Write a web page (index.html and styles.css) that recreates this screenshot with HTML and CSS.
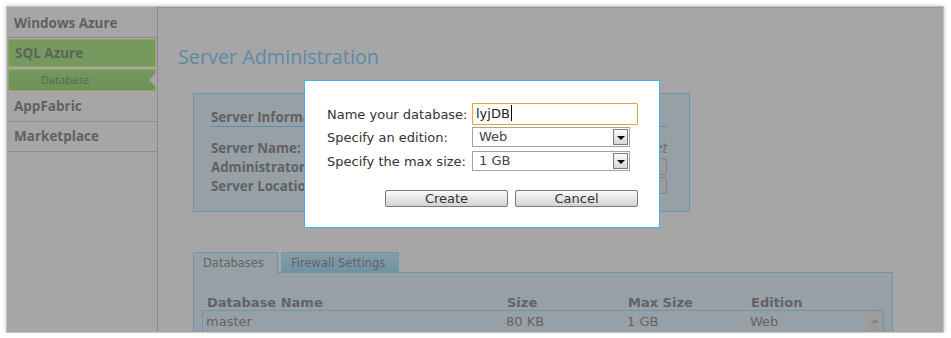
FILE: index.html
```html
<!DOCTYPE html>
<html>
<head>
	<title>Server Administration</title>
	<meta charset="utf-8">
	<link rel="stylesheet" href="styles.css">
</head>
<body>
<div class="janela">
	<div class="menu">
		<div class="item primeiro">Windows Azure</div>
		<div class="item ativo">SQL Azure</div>
		<div class="subitem ativo">Database</div>
		<div class="item">AppFabric</div>
		<div class="item">Marketplace</div>
	</div>

	<div class="conteudo">
		<h1>Server Administration</h1>

		<div class="infoServidor">
			<div class="tituloInfo">Server Information</div>
			<div class="linhaInfo">
				<span>Server Name:</span>
				<span class="valorInfo">xw2p8tzq1c.database.windows.net</span>
			</div>
			<div class="linhaInfo">
				<span>Administrator Login:</span>
				<span class="botaoInfo">Reset Password</span>
			</div>
			<div class="linhaInfo">
				<span>Server Location:</span>
				<span class="botaoInfo">Drop Server</span>
			</div>
		</div>

		<div class="abas">
			<div class="aba abaAtiva">Databases</div>
			<div class="aba">Firewall Settings</div>
		</div>
		<div class="painel">
			<div class="cabecalho">
				<span>Database Name</span>
				<span>Size</span>
				<span>Max Size</span>
				<span>Edition</span>
			</div>
			<div class="linhas">
				<div class="linha">
					<span>master</span>
					<span>80 KB</span>
					<span>1 GB</span>
					<span>Web</span>
				</div>
				<div class="rolagem"><span class="setaCima"></span></div>
			</div>
		</div>
	</div>

	<div class="sombra"></div>

	<div class="dialogo">
		<div class="campo">
			<label>Name your database:</label>
			<div class="caixaTexto">lyjDB<span class="cursor"></span></div>
		</div>
		<div class="campo campoSel">
			<label>Specify an edition:</label>
			<div class="selecao">Web<span class="botaoSel"><span class="seta"></span></span></div>
		</div>
		<div class="campo campoSel2">
			<label>Specify the max size:</label>
			<div class="selecao">1 GB<span class="botaoSel"><span class="seta"></span></span></div>
		</div>
		<div class="botoes">
			<button>Create</button>
			<button>Cancel</button>
		</div>
	</div>
</div>
</body>
</html>
```

FILE: styles.css
```css
	body{
		margin:0;
		background:#fff;
		font-family:"DejaVu Sans", Verdana, sans-serif;
	}
	.janela{
		position:relative;
		display:flex;
		margin:6px 0 0 6px;
		width:936px;
		height:325px;
		border:1px solid #c4c4c4;
		box-shadow:0 0 4px rgba(0,0,0,.25);
		overflow:hidden;
		background:#fff;
	}
	.menu{
		width:150px;
		flex:none;
		border-right:1px solid #d4d4d4;
		font-family:"Open Sans", sans-serif;
		color:#959595;
	}
	.item{
		height:29px;
		line-height:29px;
		padding-left:7px;
		font-size:13.5px;
		font-weight:bold;
		border-bottom:1px solid #d7d7d7;
	}
	.item.primeiro{
		height:30px;
		line-height:32px;
	}
	.item.ativo{
		margin:1px 1px 2px 1px;
		height:26px;
		line-height:26px;
		padding-left:6px;
		border:1px solid #e7fc8a;
		background:#b6eb94;
		color:#8e9a88;
	}
	.subitem{
		position:relative;
		margin:0 1px 1px 1px;
		height:20px;
		line-height:20px;
		padding-left:32px;
		font-size:11px;
		border:1px solid #e7fc8a;
		background:linear-gradient(#b2e991,#a8e288);
		color:#889a80;
	}
	.subitem:after{
		content:"";
		position:absolute;
		right:-1px;
		top:3px;
		border-right:7px solid #fff;
		border-top:7px solid transparent;
		border-bottom:7px solid transparent;
	}
	.conteudo{
		flex:1;
		padding-left:35px;
		border-top:1px solid #e0f0b0;
	}
	h1{
		margin:0 0 0 -15px;
		padding-top:35px;
		height:50px;
		line-height:28px;
		font-family:"Open Sans", sans-serif;
		font-weight:normal;
		font-size:19.8px;
		color:#92d3ff;
	}
	.infoServidor{
		width:456px;
		height:117px;
		padding:0 22px 0 17px;
		border:1px solid #a9e7ff;
		background:#e8f6ff;
		font-family:"Open Sans", sans-serif;
		font-weight:bold;
		font-size:13.3px;
		color:#959595;
	}
	.tituloInfo{
		margin-top:15px;
		line-height:17px;
		border-bottom:1px solid #9ad8f8;
	}
	.linhaInfo{
		display:flex;
		justify-content:space-between;
		align-items:center;
		height:19px;
	}
	.tituloInfo + .linhaInfo{
		margin-top:11px;
	}
	.valorInfo{
		font-weight:normal;
		font-style:italic;
		font-size:14px;
		color:#a8a8a8;
	}
	.botaoInfo{
		width:100px;
		height:15px;
		line-height:15px;
		border:1px solid #c8c8c8;
		border-radius:3px;
		background:#eee;
		font-weight:normal;
		font-size:10px;
		text-align:center;
		color:#888;
	}
	.abas{
		display:flex;
		gap:3px;
		margin-top:40px;
		height:20px;
	}
	.aba{
		height:19px;
		line-height:20px;
		padding:0 9px;
		border:1px solid #a9e7ff;
		border-bottom:none;
		border-radius:2px 2px 0 0;
		background:linear-gradient(#cff2ff,#ace2f8);
		font-size:11.5px;
		color:#929aa0;
	}
	.abaAtiva{
		position:relative;
		width:65px;
		height:20px;
		margin-bottom:-1px;
		background:#e8f6ff;
		color:#999;
	}
	.aba:nth-child(2){
		width:98px;
	}
	.painel{
		width:682px;
		height:80px;
		padding:0 8px;
		border:1px solid #a9e7ff;
		background:#e8f6ff;
		font-size:13px;
		color:#999;
	}
	.cabecalho, .linha{
		display:grid;
		grid-template-columns:300px 121px 123px 1fr;
	}
	.cabecalho{
		padding:20px 0 0 5px;
		height:17px;
		line-height:19px;
		font-weight:bold;
	}
	.linhas{
		position:relative;
		height:40px;
		border:1px solid #a9e7ff;
		background:#e8f6ff;
	}
	.linha{
		padding-left:3px;
		line-height:21px;
	}
	.rolagem{
		position:absolute;
		right:0;
		top:0;
		width:17px;
		height:40px;
		background:#f0f0f0;
	}
	.setaCima{
		position:absolute;
		left:5px;
		top:8px;
		border-bottom:4px solid #c8c8c8;
		border-left:4px solid transparent;
		border-right:4px solid transparent;
	}
	.sombra{
		position:absolute;
		top:0;
		left:0;
		right:0;
		bottom:0;
		background:rgba(0,0,0,.35);
	}
	.dialogo{
		position:absolute;
		left:297px;
		top:73px;
		width:311px;
		height:124px;
		padding:22px 21px 0 22px;
		border:1px solid #3fb2ea;
		background:#fff;
		font-size:13px;
		color:#333;
	}
	.campo{
		display:flex;
		align-items:center;
		height:22px;
	}
	.campo label{
		width:145px;
		flex:none;
	}
	.campoSel{
		margin-top:2px;
		height:20px;
	}
	.campoSel2{
		margin-top:4px;
		height:20px;
	}
	.caixaTexto{
		width:161px;
		height:20px;
		line-height:20px;
		padding-left:3px;
		border:1px solid #e3a53c;
		box-shadow:inset 0 0 1px #f3cf90;
		border-radius:1px;
		color:#222;
	}
	.cursor{
		display:inline-block;
		width:1px;
		height:16px;
		background:#000;
		vertical-align:-3px;
		margin-left:1px;
	}
	.selecao{
		position:relative;
		width:150px;
		height:18px;
		line-height:18px;
		padding-left:6px;
		border:1px solid #a3a3a3;
		color:#445;
	}
	.botaoSel{
		position:absolute;
		right:1px;
		top:1px;
		width:13px;
		height:14px;
		border:1px solid #7a7a7a;
		background:linear-gradient(#fdfdfd,#d6d6d6);
	}
	.seta{
		position:absolute;
		left:3px;
		top:6px;
		border-top:4px solid #000;
		border-left:4px solid transparent;
		border-right:4px solid transparent;
	}
	.botoes{
		display:flex;
		justify-content:flex-end;
		gap:7px;
		margin-top:19px;
	}
	button{
		width:123px;
		height:17px;
		padding:0;
		border:1px solid #7b7b7b;
		border-radius:2px;
		background:linear-gradient(#fafafa,#e6e6e6 50%,#d2d2d2);
		font-family:"DejaVu Sans", Verdana, sans-serif;
		font-size:13px;
		line-height:15px;
		color:#333;
	}
```
